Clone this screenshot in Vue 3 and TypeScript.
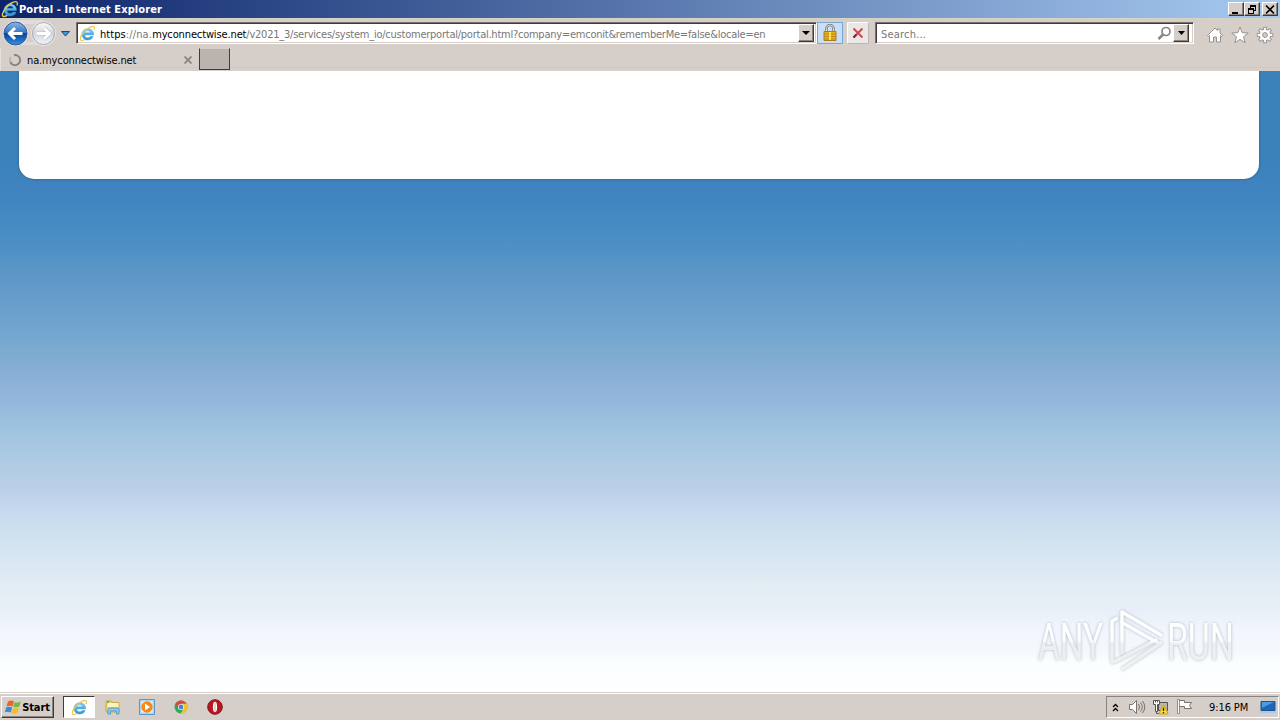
<template>
  <div class="desktop">
    <svg class="defs" width="0" height="0" aria-hidden="true">
      <defs>
        <linearGradient id="ieBlue" x1="0" y1="0" x2="0" y2="1">
          <stop offset="0" stop-color="#7fd0f6" />
          <stop offset="1" stop-color="#2c93da" />
        </linearGradient>
        <symbol id="ie" viewBox="0 0 16 16">
          <path d="M13.800 9.300H5.400c.2 3 3.800 3.400 5 1.500h3c-1.800 4.800-10.600 4.800-10.600-2 0-7 11.300-7.200 11 .5zM5.400 7.300h5.500c-.3-2.500-5.100-2.500-5.500 0z" fill="url(#ieBlue)" stroke="#3a94cf" stroke-width=".4" />
          <path d="M14.200 4.800C15.400 1.800 13.800.6 10.700 2 6.500 3.700 2.200 8.600 1.300 12.300c-.6 2.900 1.500 2.900 4.200 1.400" fill="none" stroke="#efc750" stroke-width="1.200" />
        </symbol>
      </defs>
    </svg>

    <header class="titlebar">
      <svg class="title-icon" width="18" height="18"><use href="#ie" /></svg>
      <span class="title">Portal - Internet Explorer</span>
      <div class="window-buttons">
        <button class="win-button">
          <svg width="14" height="11"><path d="M3 8h6v2H3z" /></svg>
        </button>
        <button class="win-button">
          <svg width="14" height="11" fill="none" stroke="#000" shape-rendering="crispEdges">
            <path d="M5.500 4V1.500h5v5H9M5 2h6M3.500 4.500h5v5h-5zM3 5h6" />
          </svg>
        </button>
        <button class="win-button close">
          <svg width="14" height="11"><path d="M3 1.500l8 8M11 1.500l-8 8" stroke="#000" stroke-width="1.700" /></svg>
        </button>
      </div>
    </header>

    <nav class="navbar">
      <svg class="nav-arrows" width="76" height="30" viewBox="0 0 76 30">
        <defs>
          <linearGradient id="back" x1="0" y1="0" x2="0" y2="1">
            <stop offset="0" stop-color="#8bb8e8" />
            <stop offset=".48" stop-color="#3273bf" />
            <stop offset=".5" stop-color="#09409a" />
            <stop offset="1" stop-color="#3295df" />
          </linearGradient>
          <linearGradient id="forward" x1="0" y1="0" x2="0" y2="1">
            <stop offset="0" stop-color="#fafafa" />
            <stop offset=".5" stop-color="#d3d6dd" />
            <stop offset="1" stop-color="#f2f4f6" />
          </linearGradient>
        </defs>
        <path d="M16 2h27v4H16zM16 24h27v3H16z" fill="#e0dcda" />
        <circle cx="15.500" cy="15.500" r="12.500" fill="#e9edf4" />
        <circle cx="15.500" cy="15.500" r="11.500" fill="url(#back)" stroke="#315b99" />
        <circle cx="43.500" cy="15.500" r="12.500" fill="#e4e4e4" />
        <circle cx="43.500" cy="15.500" r="11" fill="url(#forward)" stroke="#a7a9af" />
        <path d="M22.500 15.500H10M15 10l-5.500 5.500L15 21" fill="none" stroke="#fff" stroke-width="3" />
        <path d="M36.500 15.500H49M44 10l5.500 5.500L44 21" fill="none" stroke="#b9bcc3" stroke-width="4" />
        <path d="M36.500 15.500H49M44 10l5.500 5.500L44 21" fill="none" stroke="#fff" stroke-width="2.800" />
        <path d="M61.500 13.500h8l-4 4.500z" fill="#3c9bd4" stroke="#164a7c" />
      </svg>

      <div class="field address">
        <svg class="address-icon" width="17" height="17"><use href="#ie" /></svg>
        <span class="url"><b class="scheme">https</b><span class="host">://na.</span><b>myconnectwise.net</b>/v2021_3/services/system_io/customerportal/portal.html?company=emconit&amp;rememberMe=false&amp;locale=en</span>
        <button class="drop"><svg width="8" height="4"><path d="M0 0h8L4 4z" /></svg></button>
      </div>
      <div class="lock">
        <svg width="16" height="18" viewBox="0 0 16 18">
          <path d="M4.500 8V4.500a3.500 3.500 0 0 1 7 0V8" fill="none" stroke="#7c7566" stroke-width="2.400" />
          <path d="M4.500 8V4.500a3.500 3.500 0 0 1 7 0V8" fill="none" stroke="#e1ddc9" />
          <path d="M2 7.500h12v9H2z" fill="#e8b21b" stroke="#ae7d14" />
          <path d="M2 10h12M2 12.500h12M2 15h12" stroke="#bd8714" />
          <path d="M7 8h2v8H7z" fill="#ffe052" />
        </svg>
      </div>
      <button class="stop">
        <svg width="12" height="12"><path d="M1.500 1.500l9 9M10.500 1.500l-9 9" stroke="#cf4a4e" stroke-width="2" /><path d="M1.500 10.500l3-3" stroke="#693638" stroke-width="2" /></svg>
      </button>
      <div class="field search">
        <span class="placeholder">Search...</span>
        <svg class="magnifier" width="15" height="15" fill="none" stroke="#858585">
          <circle cx="9" cy="5.500" r="4" stroke-width="1.700" />
          <path d="M6 8.500L1.500 13" stroke-width="2.500" />
        </svg>
        <button class="drop"><svg width="7" height="4"><path d="M0 0h7L3.500 4z" /></svg></button>
      </div>
      <div class="tools">
        <svg width="18" height="18" viewBox="0 0 18 18">
          <path d="M1.500 9.500L9 2l2.500 2.500V3H14v4l2.800 2.500-1 1-1.300-1V16h-4v-5h-3v5h-4V9.500l-1 1z" fill="#fff" stroke="#96918e" />
        </svg>
        <svg width="18" height="18" viewBox="0 0 18 18">
          <path d="M9 1l2.200 5.700 6 .3-4.700 3.800 1.600 5.900L9 13.400l-5.100 3.300 1.600-5.900L.8 7l6-.3z" fill="#fff" stroke="#96918e" />
        </svg>
        <svg width="18" height="18" viewBox="0 0 18 18">
          <g stroke="#96918e" stroke-width="3.600">
            <path v-for="a in gearAngles" :key="a" d="M9 .8v16.400" :transform="`rotate(${a} 9 9)`" />
          </g>
          <circle cx="9" cy="9" r="5.700" fill="#fff" stroke="#96918e" />
          <g stroke="#fff" stroke-width="1.800">
            <path v-for="a in gearAngles" :key="a" d="M9 1.700v4M9 12.300v4" :transform="`rotate(${a} 9 9)`" />
          </g>
          <circle cx="9" cy="9" r="2.400" fill="#d6cec9" stroke="#96918e" />
        </svg>
      </div>
    </nav>

    <div class="tabs">
      <div class="tab">
        <svg width="14" height="14" fill="none" stroke-width="2">
          <path d="M5 2.200a5 5 0 1 1-3.600 6.600" stroke="#858382" />
          <path d="M1.400 8.800A5 5 0 0 1 2 4" stroke="#bbb5b1" />
        </svg>
        <span class="tab-label">na.myconnectwise.net</span>
        <svg class="tab-close" width="8" height="8"><path d="M.5.5l7 7M7.500.5l-7 7" stroke="#8b8683" stroke-width="1.900" /></svg>
      </div>
      <div class="new-tab"></div>
    </div>

    <main class="page">
      <div class="panel"></div>
      <svg class="watermark" width="214" height="76" viewBox="0 0 214 76">
        <defs>
          <linearGradient id="mark" gradientUnits="userSpaceOnUse" x1="0" y1="8" x2="0" y2="68">
            <stop offset="0" stop-color="#fff" />
            <stop offset=".5" stop-color="#fcfdfe" />
            <stop offset=".54" stop-color="#eceff1" />
            <stop offset="1" stop-color="#eff1f2" />
          </linearGradient>
        </defs>
        <g class="mark-text" fill="url(#mark)">
          <text x="8" y="57" textLength="65" lengthAdjust="spacingAndGlyphs">ANY</text>
          <text x="137" y="57" textLength="67" lengthAdjust="spacingAndGlyphs">RUN</text>
        </g>
        <g fill="none" stroke="url(#mark)" stroke-width="3.500" stroke-linecap="round" stroke-linejoin="round">
          <path d="M86.500 15.500L82 18v41l6-2" />
          <path d="M92 50V9l39 23" />
          <path d="M92 19.500L128 40" />
          <path d="M88 57l38-20" />
          <path d="M131 40L93 65.500" />
        </g>
      </svg>
    </main>

    <footer class="taskbar">
      <button class="start">
        <svg width="17" height="16" viewBox="0 0 17 16">
          <path d="M3 2.500Q6 .5 9 2.500L7.500 7.500Q5 6 1.500 7.500z" fill="#eb642b" />
          <path d="M9.800 3Q13 4.300 16 2.300L14.300 7.500Q11.500 9 8.300 7.800z" fill="#75b843" />
          <path d="M1.200 8.500Q4 7 7.200 8.600L5.700 13.500Q3 12-.2 13.300z" fill="#3a8ad8" />
          <path d="M8 8.900Q11 10.200 14 8.500L12.500 13.800Q9.500 15.500 6.500 14z" fill="#f4bd26" />
        </svg>
        <span>Start</span>
      </button>
      <div class="task active"><svg width="17" height="17"><use href="#ie" /></svg></div>
      <div class="task">
        <svg width="16" height="16" viewBox="0 0 16 16">
          <path d="M1 2h5l1 1.500h7V13H1z" fill="#ecd075" stroke="#c9a94f" />
          <path d="M2.500 4h11v4h-11z" fill="#fff3b6" />
          <path d="M2 2h2v2H2z" fill="#63b35a" />
          <path d="M3 15v-4q0-2 2-2h7q2 0 2 2v4h-2.500v-3H5.500v3z" fill="#8bcbea" stroke="#559fc6" />
        </svg>
      </div>
      <div class="task">
        <svg width="16" height="16" viewBox="0 0 16 16">
          <path d="M.5.5h15v15H.5z" fill="#b2d5ee" stroke="#5798c8" />
          <path d="M2.500 2.500h11v11h-11z" fill="#e9f4fb" />
          <circle cx="8" cy="8" r="5.700" fill="#f18b1b" />
          <path d="M6 4.500l5 3.500-5 3.500z" fill="#fff" />
        </svg>
      </div>
      <div class="task">
        <svg width="14" height="14" viewBox="0 0 14 14">
          <circle cx="7" cy="7" r="6.500" fill="#35a653" />
          <path d="M1.400 3.700A6.500 6.500 0 0 1 12.600 3.800H7L4.200 8.500z" fill="#df4637" />
          <path d="M12.600 3.800A6.500 6.500 0 0 1 6.500 13.500L9.800 8.500 7 3.800z" fill="#f5c330" />
          <circle cx="7" cy="7" r="3" fill="#fff" />
          <circle cx="7" cy="7" r="2.400" fill="#4284dc" />
        </svg>
      </div>
      <div class="task">
        <svg width="16" height="16" viewBox="0 0 16 16">
          <circle cx="8" cy="8" r="7.300" fill="#b51820" stroke="#8e1319" />
          <ellipse cx="8" cy="8" rx="2.100" ry="5.200" fill="#fff" />
          <path d="M8 3.500v9" stroke="#d8a2a3" />
        </svg>
      </div>

      <div class="tray">
        <svg class="chevrons" width="7" height="9" fill="none" stroke="#000" stroke-width="1.300"><path d="M1 4l2.500-2.500L6 4M1 8l2.500-2.500L6 8" /></svg>
        <svg class="speaker" width="18" height="16" fill="#fff" stroke="#77736f">
          <path d="M1.500 5.500h3l4-4v13l-4-4h-3z" />
          <path d="M10.500 5q2 3 0 6M12.500 3.500q3.500 4.500 0 9M14.500 2q4.500 6 0 12" fill="none" />
        </svg>
        <svg class="network" width="17" height="16" viewBox="0 0 17 16">
          <path d="M6.500 3.500h9v8h-9z" fill="#b9b6aa" stroke="#55534e" />
          <path d="M1.500 1.500h6v4h-2v7h-2v-7h-2z" fill="#fff" stroke="#55534e" />
          <path d="M3.500 1v2.500M5.500 1v2.500M4.500 12v2.500H8" fill="none" stroke="#55534e" />
          <path d="M11.500 6l4.700 9H6.800z" fill="#ffd92e" stroke="#cba51b" />
          <path d="M11.500 8.800v3.200M11.500 13v1.200" stroke="#222" stroke-width="1.300" />
        </svg>
        <svg class="flag" width="18" height="16">
          <path d="M2.500 1.500h6v2h7l-2 3 2 3h-7v-2h-6z" fill="#fff" stroke="#77736f" />
          <path d="M1.500.5h2v14h-2z" fill="#fff" stroke="#77736f" stroke-width=".8" />
        </svg>
        <span class="clock">9:16 PM</span>
        <svg class="monitor" width="16" height="14">
          <path d="M1 1.500h14v9H1z" fill="#1b66bc" stroke="#245488" />
          <path d="M2 2h12L2 8z" fill="#4b9be0" />
          <path d="M0 11h16v2H0z" fill="#a9c9e8" />
        </svg>
      </div>
    </footer>
  </div>
</template>

<script setup lang="ts">
const gearAngles: number[] = [0, 45, 90, 135];
</script>

<style>
body {
  margin: 0;
  overflow: hidden;
}
</style>

<style scoped>
.desktop {
  width: 1280px;
  height: 720px;
  display: flex;
  flex-direction: column;
  overflow: hidden;
  background: #d6cec9;
  font-family: "DejaVu Sans Condensed", "DejaVu Sans", sans-serif;
  font-size: 11px;
  color: #000;
}

.desktop * {
  box-sizing: border-box;
}

.defs {
  position: absolute;
}

svg {
  display: block;
  flex: none;
}

button {
  display: flex;
  align-items: center;
  justify-content: center;
  flex: none;
  padding: 0;
  font: inherit;
  background: #d6cec9;
  border: 1px solid;
  border-color: #fff #403c3a #403c3a #fff;
  box-shadow: inset -1px -1px #8a8380;
}

.titlebar {
  height: 18px;
  flex: none;
  display: flex;
  align-items: center;
  padding: 0 2px 0 1px;
  background: linear-gradient(90deg, #0c246a, #a6caf0);
  color: #fff;
  overflow: hidden;
}

.title {
  font-weight: bold;
  letter-spacing: 0.09px;
  white-space: nowrap;
}

.window-buttons {
  display: flex;
  margin-left: auto;
}

.win-button {
  width: 16px;
  height: 14px;
}

.win-button.close {
  margin-left: 2px;
}

.navbar {
  height: 30px;
  flex: none;
  display: flex;
  align-items: flex-start;
  border-top: 1px solid #d6d3c5;
}

.nav-arrows {
  margin-top: -1px;
}

.field {
  display: flex;
  align-items: center;
  height: 22px;
  margin-top: 3px;
  background: #fff;
  border: 1px solid;
  border-color: #77706d #fff #fff #77706d;
  box-shadow: inset 1px 1px #403c3a, inset -1px -1px #d6cec9;
}

.address {
  width: 741px;
  padding-left: 2px;
}

.url {
  width: 698px;
  flex: none;
  margin-left: 4px;
  padding-top: 2px;
  white-space: nowrap;
  letter-spacing: -0.24px;
  color: #777;
}

.url b {
  font-weight: normal;
  letter-spacing: -0.13px;
  color: #000;
}

.url .scheme {
  letter-spacing: 0.05px;
}

.url .host {
  letter-spacing: 0.15px;
}

.drop {
  width: 16px;
  height: 18px;
}

.lock {
  display: flex;
  align-items: center;
  justify-content: center;
  width: 26px;
  height: 22px;
  margin: 3px 0 0;
  background: #c9dff8;
  border: 1px solid #76a8da;
}

.stop {
  width: 22px;
  height: 22px;
  margin: 3px 0 0 4px;
  background: #ebe7e6;
  border-color: #fff #bdb6b2 #bdb6b2 #fff;
  border-radius: 2px;
  box-shadow: none;
}

.search {
  width: 319px;
  margin-left: 6px;
  padding: 0 4px 0 5px;
}

.placeholder {
  padding-top: 2px;
  letter-spacing: 0.2px;
  color: #777;
}

.magnifier {
  margin-left: auto;
  margin-right: 1px;
}

.tools {
  display: flex;
  gap: 7px;
  margin: 7px 0 0 12px;
}

.tabs {
  height: 23px;
  flex: none;
  display: flex;
  background: linear-gradient(#d6cec9 19px, #cdcac6 19px, #cdcac6 20px, #d6cec9 20px);
}

.tab {
  display: flex;
  align-items: center;
  width: 199px;
  padding-left: 8px;
  border-left: 1px solid #e4dfdc;
}

.tab-label {
  margin-left: 4px;
  padding-top: 1px;
  letter-spacing: -0.13px;
}

.tab-close {
  margin-left: auto;
  margin-right: 7px;
}

.new-tab {
  width: 31px;
  height: 22px;
  background: #bbb3af;
  border: 1px solid;
  border-color: #d6cec9 #403c3a #403c3a #403c3a;
}

.page {
  position: relative;
  flex: 1;
  background: linear-gradient(
    #3b82bb 0,
    #3b82bb 90px,
    #4083c0 119px,
    #458bc2 152px,
    #4f91c5 179px,
    #5a96c6 199px,
    #679dcb 229px,
    #6fa4cf 252px,
    #80abd1 286px,
    #90b3db 319px,
    #96badd 336px,
    #9cc1de 352px,
    #adcae3 386px,
    #bbd0e8 419px,
    #c3d5ec 432px,
    #cbdeee 452px,
    #d8e6f1 486px,
    #e1ecf3 512px,
    #e9eff8 539px,
    #f1f6fe 559px,
    #f5f9fc 582px,
    #f9fefe 590px,
    #fdffff 619px
  );
}

.panel {
  width: 1240px;
  height: 108px;
  margin-left: 19px;
  background: #fff;
  border-radius: 0 0 15px 15px;
  box-shadow: 0 0 2px 1px rgba(50, 85, 120, 0.45);
  clip-path: inset(0 -4px -4px -4px);
}

.watermark {
  position: absolute;
  left: 1030px;
  top: 532px;
  overflow: visible;
  filter: drop-shadow(0 0 1.5px rgba(125, 135, 145, 0.55));
}

.mark-text {
  font-family: Roboto, "Liberation Sans", sans-serif;
  font-size: 51px;
  font-weight: 400;
}

.taskbar {
  height: 28px;
  flex: none;
  display: flex;
  align-items: flex-start;
  padding-top: 3px;
  border-top: 1px solid #d6cec9;
  box-shadow: inset 0 1px #fff;
}

.start {
  width: 53px;
  height: 22px;
  margin: 0 9px 0 1px;
  font-weight: bold;
  letter-spacing: -0.1px;
}

.task {
  display: flex;
  align-items: center;
  justify-content: center;
  width: 32px;
  height: 22px;
  margin-right: 2px;
}

.task.active {
  background: #fff;
  border: 1px solid;
  border-color: #403c3a #fff #fff #403c3a;
}

.tray {
  display: flex;
  align-items: center;
  width: 173px;
  height: 22px;
  margin: 0 1px 0 auto;
  padding-left: 5px;
  border: 1px solid;
  border-color: #8a8380 #fff #fff #8a8380;
}

.speaker {
  margin-left: 9px;
}

.network {
  margin-left: 6px;
}

.flag {
  margin-left: 7px;
}

.clock {
  width: 41px;
  margin-left: 15px;
  padding-top: 1px;
  white-space: nowrap;
  letter-spacing: -0.1px;
}

.monitor {
  margin-left: 10px;
}
</style>
